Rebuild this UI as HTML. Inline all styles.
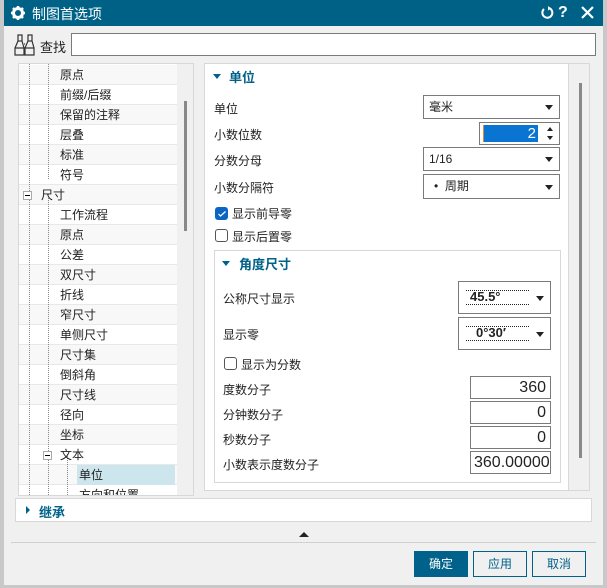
<!DOCTYPE html>
<html><head><meta charset="utf-8"><style>
*{box-sizing:border-box;margin:0;padding:0}
body{width:607px;height:588px;background:#c8c8c8;font-family:"Liberation Sans","Noto Sans CJK SC",sans-serif;font-size:12px;color:#222;position:relative;overflow:hidden}
.a{position:absolute;white-space:nowrap}
.dlg{left:4px;top:0;width:599px;height:585px;background:#f0f0f0}
.title{left:4px;top:0;width:599px;height:26px;background:#006187;color:#fff;font-size:14px}
.box{border:1px solid #7a7a7a;background:#fff}
.row{position:absolute;left:0;width:158px;height:20px;border-bottom:1px solid #e8e8e8;line-height:20px}
.row:nth-child(odd){background:#f8f8f8}
.dd{border:1px solid #7a7a7a;background:#fff;line-height:22px;padding-left:5px}
.arr{position:absolute;right:6px;top:50%;margin-top:-2px;border-left:4px solid transparent;border-right:4px solid transparent;border-top:5px solid #222}
.cb{width:13px;height:13px;border:1px solid #555;border-radius:3px;background:#fff}
.num{border:1px solid #7a7a7a;background:#fff;text-align:right;padding-right:4px;font-size:16px;line-height:21px;font-family:"Liberation Sans",sans-serif}
.btn{border:1px solid #00618a;background:#f0f0f0;color:#00618a;text-align:center;line-height:24px;font-size:12px}
.hd{color:#00618a;font-weight:bold;font-size:13px}
.tri{border-left:4px solid transparent;border-right:4px solid transparent;border-top:5px solid #00618a;width:0;height:0}
.dot{border-left:1px dotted #888}
.t div{white-space:nowrap}
</style></head><body>
<div class="a dlg"></div>
<div class="a title">
 <svg class="a" style="left:7px;top:6px" width="14" height="14" viewBox="0 0 14 14"><circle cx="7" cy="7" r="4.5" fill="none" stroke="#fff" stroke-width="3"/><g stroke="#fff" stroke-width="2.5"><path d="M7 0v3M7 11v3M0 7h3M11 7h3M2 2l2 2M10 10l2 2M12 2l-2 2M2 12l2-2"/></g><circle cx="7" cy="7" r="1.8" fill="#006187"/></svg>
 <span class="a" style="left:28px;top:4px">制图首选项</span>
 <svg class="a" style="left:536px;top:6px" width="14" height="14" viewBox="0 0 14 14"><path d="M4 3A5 5 0 1 0 9 2" fill="none" stroke="#fff" stroke-width="2"/><path d="M8 0l3 2.5-3 2z" fill="#fff"/></svg>
 <span class="a" style="left:554px;top:4px;font-weight:bold;font-size:16px">?</span>
 <svg class="a" style="left:577px;top:6px" width="13" height="13"><path d="M1 1l11 11M12 1L1 12" stroke="#fff" stroke-width="2.2"/></svg>
</div>
<svg class="a" style="left:14px;top:34px" width="24" height="22" viewBox="0 0 24 22"><g fill="none" stroke="#333" stroke-width="1.2"><rect x="4" y="1" width="4" height="6"/><rect x="14" y="1" width="4" height="6"/><path d="M4 7L1 14v7h9v-7L8 7M14 7l-3 7v7h9v-7l-2-7M1 14h9M11 14h9M10 10h1"/></g></svg>
<span class="a" style="left:40px;top:37px;font-size:13px">查找</span>
<div class="a box" style="left:71px;top:33px;width:525px;height:23px"></div>

<div class="a" style="left:18px;top:63px;width:176px;height:433px;background:#fff;border:1px solid #d8d8d8;overflow:hidden">
 <div class="a" style="left:0;top:0;width:158px;height:431px">
  <div class="row" style="top:1px"></div><div class="row" style="top:21px"></div><div class="row" style="top:41px"></div><div class="row" style="top:61px"></div><div class="row" style="top:81px"></div><div class="row" style="top:101px"></div><div class="row" style="top:121px"></div><div class="row" style="top:141px"></div><div class="row" style="top:161px"></div><div class="row" style="top:181px"></div><div class="row" style="top:201px"></div><div class="row" style="top:221px"></div><div class="row" style="top:241px"></div><div class="row" style="top:261px"></div><div class="row" style="top:281px"></div><div class="row" style="top:301px"></div><div class="row" style="top:321px"></div><div class="row" style="top:341px"></div><div class="row" style="top:361px"></div><div class="row" style="top:381px"></div><div class="row" style="top:401px"></div><div class="row" style="top:421px"></div>
 </div>
 <div class="a" style="left:58px;top:401px;width:98px;height:20px;background:#cde5ec"></div>
 <div class="a dot" style="left:10px;top:0;height:431px"></div>
 <div class="a dot" style="left:29px;top:0;height:115px"></div>
 <div class="a dot" style="left:29px;top:130px;height:301px"></div>
 <div class="a dot" style="left:48px;top:390px;height:41px"></div>
 <div class="a" style="left:4px;top:127px;width:9px;height:9px;border:1px solid #aaa;background:#fff"><div class="a" style="left:1px;top:3px;width:5px;height:1px;background:#000"></div></div>
 <div class="a" style="left:24px;top:387px;width:9px;height:9px;border:1px solid #aaa;background:#fff"><div class="a" style="left:1px;top:3px;width:5px;height:1px;background:#000"></div></div>
 <div class="a t" style="left:0;top:0;width:160px;height:431px;font-size:12px;line-height:20px">
  <div class="a" style="left:41px;top:1px">原点</div>
  <div class="a" style="left:41px;top:21px">前缀/后缀</div>
  <div class="a" style="left:41px;top:41px">保留的注释</div>
  <div class="a" style="left:41px;top:61px">层叠</div>
  <div class="a" style="left:41px;top:81px">标准</div>
  <div class="a" style="left:41px;top:101px">符号</div>
  <div class="a" style="left:22px;top:121px">尺寸</div>
  <div class="a" style="left:41px;top:141px">工作流程</div>
  <div class="a" style="left:41px;top:161px">原点</div>
  <div class="a" style="left:41px;top:181px">公差</div>
  <div class="a" style="left:41px;top:201px">双尺寸</div>
  <div class="a" style="left:41px;top:221px">折线</div>
  <div class="a" style="left:41px;top:241px">窄尺寸</div>
  <div class="a" style="left:41px;top:261px">单侧尺寸</div>
  <div class="a" style="left:41px;top:281px">尺寸集</div>
  <div class="a" style="left:41px;top:301px">倒斜角</div>
  <div class="a" style="left:41px;top:321px">尺寸线</div>
  <div class="a" style="left:41px;top:341px">径向</div>
  <div class="a" style="left:41px;top:361px">坐标</div>
  <div class="a" style="left:41px;top:381px">文本</div>
  <div class="a" style="left:60px;top:401px">单位</div>
  <div class="a" style="left:60px;top:421px">方向和位置</div>
 </div>
 <div class="a" style="left:158px;top:0;width:16px;height:431px;background:#f0f0f0"></div>
 <div class="a" style="left:165px;top:37px;width:3px;height:130px;background:#888"></div>
</div>

<div class="a" style="left:204px;top:63px;width:386px;height:428px;border:1px solid #d8d8d8;background:#f0f0f0"></div>
<div class="a" style="left:205px;top:64px;width:364px;height:426px;background:#fff;border-right:1px solid #d8d8d8"></div>
<div class="a" style="left:579px;top:83px;width:3px;height:375px;background:#888"></div>
<div class="a tri" style="left:213px;top:74px"></div>
<span class="a hd" style="left:229px;top:67px">单位</span>
<span class="a" style="left:214px;top:100px">单位</span>
<div class="a dd" style="left:423px;top:95px;width:137px;height:24px">毫米<div class="arr"></div></div>
<span class="a" style="left:214px;top:126px">小数位数</span>
<div class="a box" style="left:479px;top:122px;width:81px;height:23px"><div class="a" style="left:3px;top:2px;width:55px;height:17px;background:#0a74d2;color:#fff;text-align:right;font-size:15px;line-height:17px;padding-right:2px;border-left:1px solid #e08a30">2</div>
 <div class="a" style="left:67px;top:4px;border-left:3px solid transparent;border-right:3px solid transparent;border-bottom:4px solid #222"></div>
 <div class="a" style="left:67px;top:13px;border-left:3px solid transparent;border-right:3px solid transparent;border-top:4px solid #222"></div></div>
<span class="a" style="left:214px;top:152px">分数分母</span>
<div class="a dd" style="left:423px;top:147px;width:137px;height:24px">1/16<div class="arr"></div></div>
<span class="a" style="left:214px;top:179px">小数分隔符</span>
<div class="a dd" style="left:423px;top:174px;width:137px;height:25px;padding-left:10px">•&nbsp;&nbsp;周期<div class="arr"></div></div>
<div class="a cb" style="left:215px;top:207px;background:#0a66c2;border-color:#0a66c2"><svg class="a" style="left:2px;top:3px" width="8" height="6"><path d="M0.5 3l2 2 5-4.5" stroke="#fff" fill="none" stroke-width="1.2"/></svg></div>
<span class="a" style="left:232px;top:205px">显示前导零</span>
<div class="a cb" style="left:215px;top:229px"></div>
<span class="a" style="left:232px;top:228px">显示后置零</span>
<div class="a" style="left:214px;top:250px;width:347px;height:233px;border:1px solid #d8d8d8"></div>
<div class="a tri" style="left:222px;top:261px"></div>
<span class="a hd" style="left:239px;top:254px">角度尺寸</span>
<span class="a" style="left:223px;top:290px">公称尺寸显示</span>
<div class="a box" style="left:458px;top:281px;width:93px;height:33px">
 <div class="a" style="left:7px;top:8px;width:63px;border-top:1px dotted #222"></div>
 <div class="a" style="left:7px;top:22px;width:63px;border-top:1px dotted #222"></div>
 <span class="a" style="left:11px;top:7px;font-size:13px;font-weight:bold;line-height:15px">45.5°</span><div class="arr"></div></div>
<span class="a" style="left:223px;top:326px">显示零</span>
<div class="a box" style="left:458px;top:317px;width:93px;height:33px">
 <div class="a" style="left:7px;top:8px;width:63px;border-top:1px dotted #222"></div>
 <div class="a" style="left:7px;top:22px;width:63px;border-top:1px dotted #222"></div>
 <span class="a" style="left:17px;top:7px;font-size:13px;font-weight:bold;line-height:15px">0°30′</span><div class="arr"></div></div>
<div class="a cb" style="left:224px;top:357px"></div>
<span class="a" style="left:241px;top:356px">显示为分数</span>
<span class="a" style="left:223px;top:381px">度数分子</span>
<div class="a num" style="left:470px;top:376px;width:81px;height:23px">360</div>
<span class="a" style="left:223px;top:406px">分钟数分子</span>
<div class="a num" style="left:470px;top:401px;width:81px;height:23px">0</div>
<span class="a" style="left:223px;top:431px">秒数分子</span>
<div class="a num" style="left:470px;top:426px;width:81px;height:23px">0</div>
<span class="a" style="left:223px;top:456px">小数表示度数分子</span>
<div class="a num" style="left:470px;top:451px;width:81px;height:23px;text-align:left;padding-left:3px;overflow:hidden">360.00000</div>

<div class="a" style="left:15px;top:498px;width:577px;height:24px;border:1px solid #d8d8d8;background:#fff"></div>
<div class="a" style="left:26px;top:506px;border-top:4px solid transparent;border-bottom:4px solid transparent;border-left:4px solid #00618a"></div>
<span class="a hd" style="left:39px;top:502px">继承</span>
<div class="a" style="left:299px;top:532px;border-left:5px solid transparent;border-right:5px solid transparent;border-bottom:5px solid #222"></div>
<div class="a" style="left:11px;top:542px;width:585px;height:1px;background:#d0d0d0"></div>
<div class="a btn" style="left:414px;top:551px;width:54px;height:26px;background:#00618a;color:#fff">确定</div>
<div class="a btn" style="left:473px;top:551px;width:54px;height:26px">应用</div>
<div class="a btn" style="left:532px;top:551px;width:54px;height:26px">取消</div>
</body></html>
